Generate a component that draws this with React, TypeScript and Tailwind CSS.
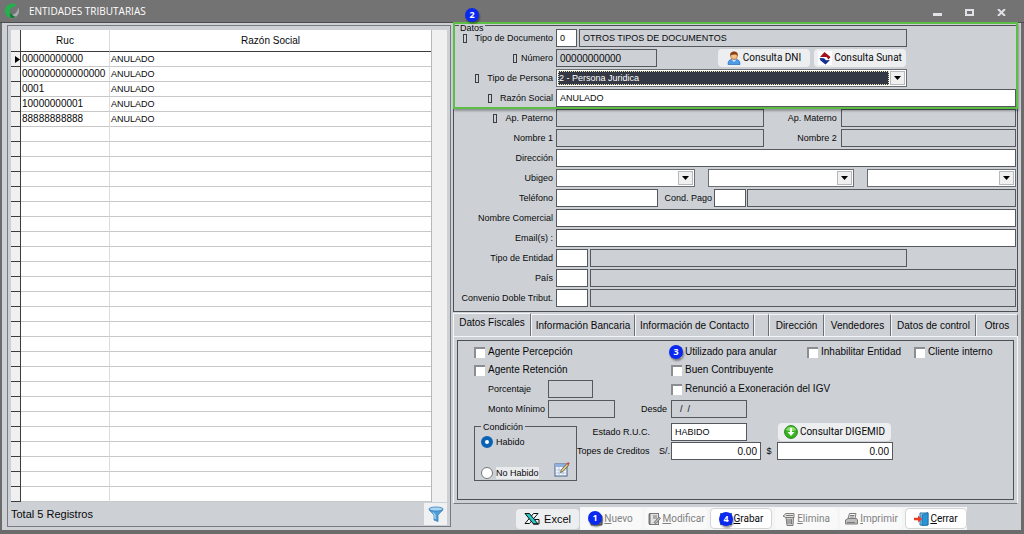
import React from 'react';
import clsx from 'clsx';

const records = [
  { ruc: '00000000000', name: 'ANULADO' },
  { ruc: '000000000000000', name: 'ANULADO' },
  { ruc: '0001', name: 'ANULADO' },
  { ruc: '10000000001', name: 'ANULADO' },
  { ruc: '88888888888', name: 'ANULADO' },
];

const TOTAL_ROWS = 30;

function Badge({ n, className }: { n: number; className?: string }) {
  return (
    <span
      className={clsx(
        'absolute z-20 flex h-[14px] w-[14px] items-center justify-center rounded-full bg-[#0a28f0] font-["Open_Sans",sans-serif] text-[9px] font-bold text-white shadow-[1px_2px_2px_rgba(0,0,0,0.4)]',
        className
      )}
    >
      {n}
    </span>
  );
}

type FieldProps = React.InputHTMLAttributes<HTMLInputElement> & { disabledLook?: boolean };

function Field({ disabledLook, className, ...props }: FieldProps) {
  return (
    <input
      type="text"
      readOnly={disabledLook}
      className={clsx(
        'h-[18px] min-w-0 rounded-none border border-[#55585d] px-[3px] outline-none',
        disabledLook ? 'bg-[#cdd0d5]' : 'bg-white',
        className
      )}
      {...props}
    />
  );
}

function Row({
  label,
  htmlFor,
  required,
  tight,
  children,
}: {
  label: string;
  htmlFor: string;
  required?: boolean;
  tight?: boolean;
  children: React.ReactNode;
}) {
  return (
    <div className="flex h-[18px] items-center">
      <label
        htmlFor={htmlFor}
        className={clsx(
          'mr-[3px] flex w-[98px] shrink-0 items-center justify-end whitespace-nowrap',
          tight ? 'gap-1' : 'gap-2'
        )}
      >
        {required && <span className="h-[9px] w-1 shrink-0 border border-[#3a3d42]" />}
        {label}
      </label>
      {children}
    </div>
  );
}

function Combo({
  id,
  label,
  value,
  active,
  className,
}: {
  id: string;
  label?: string;
  value?: string;
  active?: boolean;
  className?: string;
}) {
  return (
    <div className={clsx('relative flex h-[18px] border border-[#6a6d72] bg-white p-px', className)}>
      <select
        id={id}
        aria-label={label}
        className={clsx(
          'mr-4 min-w-0 flex-1 appearance-none rounded-none outline-none',
          active && 'border border-dotted border-[#e8e4b0] bg-[#333844] text-white'
        )}
      >
        <option>{value}</option>
      </select>
      <span className="pointer-events-none absolute top-px right-px flex h-[14px] w-[15px] items-center justify-center border border-[#b5b8bc] bg-[#f0f0f0]">
        <svg width="7" height="4" viewBox="0 0 7 4">
          <path d="M0 0h7L3.500 4z" fill="#000" />
        </svg>
      </span>
    </div>
  );
}

function Check({ id, label, className, children }: { id: string; label: string; className?: string; children?: React.ReactNode }) {
  return (
    <div className={clsx('relative flex h-[18px] shrink-0 items-center gap-[3px] text-[10px] whitespace-nowrap', className)}>
      <input
        id={id}
        type="checkbox"
        className="h-[11px] w-[11px] appearance-none border-t-2 border-l-2 border-[#8a8d92] bg-white"
      />
      <label htmlFor={id}>{label}</label>
      {children}
    </div>
  );
}

function UserIcon() {
  return (
    <svg width="14" height="14" viewBox="0 0 14 14">
      <path d="M1 13.500c0-4 2-5.500 6-5.500s6 1.500 6 5.500z" fill="#4f9be6" stroke="#2a6cb5" strokeWidth=".7" />
      <path d="M4.500 8.500 7 11l2.500-2.500z" fill="#dcecfb" />
      <circle cx="7" cy="5" r="3.400" fill="#f6c08a" stroke="#a35a1d" strokeWidth=".6" />
      <path d="M3.200 5C2.800 1.500 5 .5 7 .5s4.300 1 3.800 4.500C10 3.600 9 3.200 7.500 3.500 5.500 3.800 4 3.500 3.200 5z" fill="#8a3f14" />
    </svg>
  );
}

function SunatIcon() {
  return (
    <svg width="14" height="14" viewBox="0 0 14 14">
      <rect width="14" height="14" fill="#fff" />
      <path d="M6.500 1 12.500 6 10.500 8.500 8.500 6 2 6z" fill="#a3121d" />
      <path d="M1.500 7 6 7.200 8 9.300 12 9 7.500 13.500 2.500 9.500z" fill="#12308f" />
    </svg>
  );
}

function DownloadIcon() {
  return (
    <svg width="14" height="14" viewBox="0 0 14 14">
      <circle cx="7" cy="7" r="6.400" fill="#35b51f" stroke="#1f7d12" strokeWidth=".9" />
      <path d="M2 5a5.500 5.500 0 0 1 10 0c-3 1.500-7 1.500-10 0z" fill="#8fe070" />
      <path d="M6 3h2v4h2.500L7 11 3.500 7H6z" fill="#fff" />
    </svg>
  );
}

function EditIcon() {
  return (
    <svg width="16" height="16" viewBox="0 0 16 16">
      <rect x="1" y="3" width="12" height="12" fill="#f4f8fd" stroke="#44608c" />
      <path d="M1 3h12v3H1z" fill="#8fb0de" />
      <path d="M5 6v9M9 6v9M1 9h12M1 12h12" stroke="#a9bcd6" strokeWidth=".8" />
      <path d="M6.500 11.500l.7-2.500L13 2.500l1.700 1.500-5.800 6.500z" fill="#e5cf86" stroke="#4a4030" strokeWidth=".7" />
      <path d="M12.800 2.700 14 1l1.700 1.300-1.200 1.600z" fill="#d0453c" />
    </svg>
  );
}

function FunnelIcon() {
  return (
    <svg width="16" height="16" viewBox="0 0 16 16">
      <path d="M1 3c0 2 5 5 5 6.500V14l4 1.500v-6C10 8 15 5 15 3z" fill="#4d9fdb" stroke="#2d74ae" strokeWidth=".7" />
      <ellipse cx="8" cy="3" rx="7" ry="2" fill="#a8d6f5" stroke="#2d74ae" strokeWidth=".7" />
      <path d="M5 6.500 7 9v4" stroke="#d3ecfb" fill="none" />
    </svg>
  );
}

function ExcelIcon() {
  return (
    <svg width="16" height="14" viewBox="0 0 16 14">
      <path d="M14 1.500H9.500L1 11.500h4.500z" fill="#f4fbfb" stroke="#111" />
      <path d="M1 1.500h4.500L14 12H9.500z" fill="#27c7c4" stroke="#111" />
      <path d="M11 7.500h4v4.500H9" stroke="#111" fill="none" />
    </svg>
  );
}

function NewIcon() {
  return (
    <svg width="14" height="14" viewBox="0 0 14 14">
      <path d="M2 1h8l3 3v9H2z" fill="#a8a8a8" stroke="#555" />
    </svg>
  );
}

function NotebookIcon() {
  return (
    <svg width="14" height="14" viewBox="0 0 14 14" fill="none" stroke="#777">
      <rect x="2.500" y="1.500" width="9" height="11" fill="#e2e2e2" />
      <path d="M1 3h3M1 5h3M1 7h3M1 9h3M1 11h3M6 4h4M6 6h4" />
      <path d="M7 10.500 12 5l1.500 1.300L9 11.500z" fill="#bbb" />
    </svg>
  );
}

function SaveIcon() {
  return (
    <svg width="14" height="14" viewBox="0 0 14 14">
      <rect x="1" y="1" width="12" height="12" fill="#3a76b8" />
      <rect x="4" y="8" width="6" height="5" fill="#e8eef5" />
    </svg>
  );
}

function TrashIcon() {
  return (
    <svg width="14" height="14" viewBox="0 0 14 14" fill="none" stroke="#7c7c7c">
      <path d="M4 5.500h7.500l-.5 8H5z" fill="#cfcfcf" />
      <path d="M1 4 4 1.500h8v4H4z" fill="#e5e5e5" />
      <path d="M6 7v5M8 7v5M9.500 7v5M4 3.500h7" />
    </svg>
  );
}

function PrinterIcon() {
  return (
    <svg width="15" height="14" viewBox="0 0 15 14" stroke="#7c7c7c">
      <path d="M4 6.500 5.500 1.500H12L11 6.500z" fill="#f7f7f7" />
      <path d="M1.500 8 4 6.500h8.500l1 1.500v4h-12z" fill="#bdbdbd" />
      <path d="M3 10.500h8M6 3.500h4.500M5.500 5h4.500" fill="none" />
    </svg>
  );
}

function ExitIcon() {
  return (
    <svg width="15" height="14" viewBox="0 0 15 14">
      <path d="M6 1h8v12H6z" fill="#8cc4ea" stroke="#2477ad" />
      <path d="M8 3l6-2.500V13l-6 1z" fill="#2b94d6" stroke="#155f93" strokeWidth=".6" />
      <path d="M0 5.800h4V3.500L8 7l-4 3.500V8.200H0z" fill="#ea3a22" />
    </svg>
  );
}

const tabs = [
  { label: 'Datos Fiscales', width: 'w-[78px]' },
  { label: 'Información Bancaria', width: 'w-[104px]' },
  { label: 'Información de Contacto', width: 'w-[119px]' },
  { label: '', width: 'w-[15px]' },
  { label: 'Dirección', width: 'w-[55px]' },
  { label: 'Vendedores', width: 'w-[67px]' },
  { label: 'Datos de control', width: 'w-[85px]' },
  { label: 'Otros', width: 'w-[42px]' },
];

const actions = [
  { label: 'Nuevo', icon: <NewIcon />, disabled: true, badge: 1 },
  { label: 'Modificar', icon: <NotebookIcon />, disabled: true },
  { label: 'Grabar', icon: <SaveIcon />, badge: 4 },
  { label: 'Elimina', icon: <TrashIcon />, disabled: true },
  { label: 'Imprimir', icon: <PrinterIcon />, disabled: true },
  { label: 'Cerrar', icon: <ExitIcon /> },
];

function TitleBar() {
  return (
    <header className="flex h-[23px] items-center border-b border-[#4c4c4c] bg-[#737373] pr-[17px] pl-[5px]">
      <svg width="14" height="16" viewBox="0 0 14 16">
        <path d="M6 15.500c5 0 8-4 8-8 0-1.500-.5-2.500-1-3 0 4-2.500 7-7 7.500-1 1 0 3 0 3.500z" fill="#a9adb5" />
        <path d="M9 .5C3 0 0 4 0 8c0 3.500 2.500 6.500 6 7-1.500-2-1.500-4-.5-5C3.500 7 6 3.500 11.500 3 11 1.500 10 .8 9 .5z" fill="#22b14c" />
        <path d="M6 15c2 .5 4-.5 5-1.500-2 0-4.500-1.500-5-4-1.500 1.500-1.500 4 0 5.500z" fill="#147a35" />
      </svg>
      <h1 className="ml-[10px] flex-1 font-['Open_Sans',sans-serif] text-[10px] text-white">ENTIDADES TRIBUTARIAS</h1>
      <div className="flex gap-[22px]">
        <button aria-label="Minimizar" className="flex h-[10px] w-[10px] items-end">
          <span className="h-[3px] w-[9px] bg-[#e0e0e6]" />
        </button>
        <button aria-label="Maximizar" className="flex h-[10px] w-[10px] items-end">
          <span className="h-[7px] w-[9px] border-2 border-[#e0e0e6]" />
        </button>
        <button aria-label="Cerrar ventana" className="flex h-[10px] w-[10px] items-end">
          <svg width="9" height="7" viewBox="0 0 9 7">
            <path d="M1 0l7 7M8 0L1 7" stroke="#e0e0e6" strokeWidth="2" />
          </svg>
        </button>
      </div>
    </header>
  );
}

function RecordList() {
  return (
    <section className="flex w-[444px] shrink-0 flex-col self-start border border-[#777a80] px-[3px] pt-[4px]">
      <div className="flex bg-[#f0f0f0]">
        <table className="flex-1 table-fixed border-separate border-spacing-0 bg-white">
          <colgroup>
            <col className="w-[10px]" />
            <col className="w-[89px]" />
            <col />
          </colgroup>
          <thead className="text-[10px]">
            <tr>
              <th className="h-[22px] w-[10px] border-r border-b border-[#3c3c3c] bg-[#f0f0f0] p-0" />
              <th className="h-[22px] w-[89px] border-r border-r-[#dcdcdc] border-b border-b-[#3c3c3c] p-0 font-normal">Ruc</th>
              <th className="h-[22px] border-b border-[#3c3c3c] p-0 font-normal">Razón Social</th>
            </tr>
          </thead>
          <tbody>
            {Array.from({ length: TOTAL_ROWS }, (_, i) => {
              const record = records[i];
              return (
                <tr key={i}>
                  <td className="h-[15px] border-r border-b border-[#3c3c3c] bg-[#f0f0f0] p-0">
                    {i === 0 && (
                      <svg className="ml-[4px]" width="5" height="7" viewBox="0 0 5 7">
                        <path d="M0 0v7l5-3.500z" />
                      </svg>
                    )}
                  </td>
                  <td className="h-[15px] border-r border-r-[#dcdcdc] border-b border-b-[#c8c8c8] p-0 pl-px text-[10px]">{record?.ruc}</td>
                  <td className="h-[15px] border-b border-[#c8c8c8] p-0 pl-px">{record?.name}</td>
                </tr>
              );
            })}
          </tbody>
        </table>
        <div className="w-4 border-l border-[#b8b8b8]" />
      </div>
      <div className="flex h-[24px] items-center justify-between text-[11px]">
        <span>Total 5 Registros</span>
        <button aria-label="Filtrar" className="flex h-[22px] w-[23px] items-center justify-center bg-[#f0f1f3]">
          <FunnelIcon />
        </button>
      </div>
    </section>
  );
}

const lookupButton =
  'flex h-[18px] items-center justify-center gap-[2px] rounded-sm bg-[#eceef0] font-["Roboto",sans-serif] text-[10px] whitespace-nowrap';

function DataForm() {
  return (
    <fieldset className="relative flex min-w-0 flex-col gap-[2px] border border-[#4c4f54] px-px pt-[3px] pb-[4px]">
      <legend className="absolute -top-[2px] left-[5px] z-20 bg-[#cdd0d5] px-px leading-[8px]">Datos</legend>

      <div className="relative flex flex-col gap-[2px]">
        <div className="pointer-events-none absolute -inset-x-[2px] -top-[7px] -bottom-[2px] z-10 border-2 border-[#5bbf45] shadow-[1px_2px_2px_rgba(0,0,0,0.3)]">
          <Badge n={2} className="-top-[16px] left-[10px]" />
        </div>
        <Row label="Tipo de Documento" htmlFor="tipoDoc" required>
          <Field id="tipoDoc" defaultValue="0" className="w-[21px]" />
          <Field aria-label="Descripción del documento" disabledLook defaultValue="OTROS TIPOS DE DOCUMENTOS" className="mr-[109px] ml-[2px] flex-1" />
        </Row>
        <Row label="Número" htmlFor="numero" required tight>
          <Field id="numero" disabledLook defaultValue="00000000000" className="w-[101px] text-[10px]" />
          <div className="mr-[110px] ml-auto flex gap-1">
            <button className={clsx(lookupButton, 'w-[92px]')}>
              <UserIcon />
              Consulta DNI
            </button>
            <button className={clsx(lookupButton, 'w-[92px]')}>
              <SunatIcon />
              Consulta Sunat
            </button>
          </div>
        </Row>
        <Row label="Tipo de Persona" htmlFor="tipoPersona" required>
          <Combo id="tipoPersona" value="2 - Persona Juridica" active className="mr-[109px] flex-1" />
        </Row>
        <Row label="Razón Social" htmlFor="razon" required>
          <Field id="razon" defaultValue="ANULADO" className="flex-1" />
        </Row>
      </div>

      <Row label="Ap. Paterno" htmlFor="paterno" required>
        <Field id="paterno" disabledLook className="w-0 grow-[209]" />
        <label htmlFor="materno" className="mr-1 w-[73px] text-right">Ap. Materno</label>
        <Field id="materno" disabledLook className="w-0 grow-[175]" />
      </Row>
      <Row label="Nombre 1" htmlFor="nombre1">
        <Field id="nombre1" disabledLook className="w-0 grow-[209]" />
        <label htmlFor="nombre2" className="mr-1 w-[73px] text-right">Nombre 2</label>
        <Field id="nombre2" disabledLook className="w-0 grow-[175]" />
      </Row>
      <Row label="Dirección" htmlFor="direccion">
        <Field id="direccion" className="flex-1" />
      </Row>
      <Row label="Ubigeo" htmlFor="departamento">
        <div className="flex flex-1 gap-[13px]">
          <Combo id="departamento" className="w-0 grow-[139]" />
          <Combo id="provincia" label="Provincia" className="w-0 grow-[146]" />
          <Combo id="distrito" label="Distrito" className="w-0 grow-[149]" />
        </div>
      </Row>
      <Row label="Teléfono" htmlFor="telefono">
        <Field id="telefono" className="w-[102px]" />
        <label htmlFor="condPago" className="mr-[2px] w-[54px] text-right">Cond. Pago</label>
        <Field id="condPago" className="w-[32px]" />
        <Field aria-label="Descripción de pago" disabledLook className="ml-px flex-1" />
      </Row>
      <Row label="Nombre Comercial" htmlFor="comercial">
        <Field id="comercial" className="flex-1" />
      </Row>
      <Row label="Email(s) :" htmlFor="email">
        <Field id="email" className="flex-1" />
      </Row>
      <Row label="Tipo de Entidad" htmlFor="entidad">
        <Field id="entidad" className="w-[32px]" />
        <Field aria-label="Descripción de entidad" disabledLook className="mr-[109px] ml-[2px] flex-1" />
      </Row>
      <Row label="País" htmlFor="pais">
        <Field id="pais" className="w-[32px]" />
        <Field aria-label="Nombre del país" disabledLook className="ml-[2px] flex-1" />
      </Row>
      <Row label="Convenio Doble Tribut." htmlFor="convenio">
        <Field id="convenio" className="w-[32px]" />
        <Field aria-label="Descripción del convenio" disabledLook className="ml-[2px] flex-1" />
      </Row>
    </fieldset>
  );
}

function FiscalPanel() {
  return (
    <div className="border-x border-b border-x-[#f4f5f6] border-b-[#777a80] p-[3px]">
      <div className="h-[160px] border border-[#4c4f54] px-4 pt-[2px]">
        <div className="flex">
          <Check id="percepcion" label="Agente Percepción" className="w-[197px]" />
          <Check id="anular" label="Utilizado para anular" className="w-[136px]">
            <Badge n={3} className="top-[2px] -left-[2px]" />
          </Check>
          <Check id="inhabilitar" label="Inhabilitar Entidad" className="w-[107px]" />
          <Check id="interno" label="Cliente interno" />
        </div>
        <div className="flex">
          <Check id="retencion" label="Agente Retención" className="w-[197px]" />
          <Check id="buen" label="Buen Contribuyente" />
        </div>
        <div className="mt-px flex items-center">
          <label htmlFor="porcentaje" className="w-[74px] pl-[14px]">Porcentaje</label>
          <div className="w-[123px]">
            <Field id="porcentaje" disabledLook className="block w-[45px]" />
          </div>
          <Check id="renuncio" label="Renunció a Exoneración del IGV" />
        </div>
        <div className="mt-[2px] flex items-center">
          <label htmlFor="monto" className="w-[74px] pl-[14px] whitespace-nowrap">Monto Mínimo</label>
          <Field id="monto" disabledLook className="w-[67px]" />
          <label htmlFor="desde" className="mr-1 w-[52px] text-right">Desde</label>
          <Field id="desde" disabledLook defaultValue="  /  /" className="w-[76px] whitespace-pre" />
        </div>
        <div className="flex">
          <fieldset className="relative mt-2 h-[55px] w-[103px] border border-[#55585d] px-[6px] pt-2">
            <legend className="absolute -top-[6px] left-[6px] bg-[#cdd0d5] px-[2px] leading-[12px]">Condición</legend>
            <div className="flex h-[14px] items-center gap-[3px]">
              <input
                id="habido"
                name="condicion"
                type="radio"
                defaultChecked
                className="h-[12px] w-[12px] appearance-none rounded-full border-[#8a8d92] bg-white checked:border-4 checked:border-[#0a62b5]"
              />
              <label htmlFor="habido">Habido</label>
            </div>
            <div className="mt-3 flex items-center gap-[3px]">
              <input
                id="noHabido"
                name="condicion"
                type="radio"
                className="h-[12px] w-[12px] appearance-none rounded-full border border-[#77797d] bg-white checked:border-4"
              />
              <label htmlFor="noHabido" className="bg-[#e9eaec] whitespace-nowrap">No Habido</label>
              <button aria-label="Editar condición" className="mb-2 ml-auto">
                <EditIcon />
              </button>
            </div>
          </fieldset>
          <div className="mt-[5px] flex flex-1 flex-col gap-px">
            <div className="flex items-center">
              <label htmlFor="estado" className="mr-[21px] w-[73px] text-right whitespace-nowrap">Estado R.U.C.</label>
              <Field id="estado" defaultValue="HABIDO" className="w-[76px]" />
              <button className={clsx(lookupButton, 'ml-[31px] w-[113px]')}>
                <DownloadIcon />
                Consultar DIGEMID
              </button>
            </div>
            <div className="flex items-center">
              <label htmlFor="tope" className="flex w-[94px] justify-between pr-px whitespace-nowrap">
                <span>Topes de Creditos</span>
                <span>S/.</span>
              </label>
              <Field id="tope" defaultValue="0.00" className="w-[90px] text-right text-[10px]" />
              <label htmlFor="topeUsd" className="w-[16px] text-center">$</label>
              <Field id="topeUsd" defaultValue="0.00" className="w-[116px] text-right text-[10px]" />
            </div>
          </div>
        </div>
      </div>
    </div>
  );
}

export default function App() {
  return (
    <div className="flex min-h-screen flex-col bg-[#6b6b6b] font-['Liberation_Sans',Arial,sans-serif] text-[9px] leading-[12px] text-[#08090a]">
      <TitleBar />
      <main className="mr-[3px] mb-[4px] ml-[2px] flex flex-1 gap-[2px] bg-[#cdd0d5] pt-[2px] pr-[3px] pl-[5px]">
        <RecordList />
        <div className="flex min-w-0 flex-1 flex-col">
          <DataForm />
          <div role="tablist" className="mt-px flex h-[24px] border-b border-[#f4f5f6] text-[10px]">
            {tabs.map((tab, i) => (
              <button
                key={i}
                role="tab"
                aria-label={tab.label || 'Vacía'}
                aria-selected={i === 0}
                className={clsx(
                  'border-t border-r border-l border-t-[#f4f5f6] border-r-[#6c6f74] border-l-[#f4f5f6] whitespace-nowrap',
                  i === 0 ? 'pb-1' : 'mt-px',
                  tab.width
                )}
              >
                {tab.label}
              </button>
            ))}
          </div>
          <FiscalPanel />
          <div className="mt-[3px] mr-[51px] flex items-center justify-end gap-px">
            <button className="flex h-[20px] w-[63px] items-center justify-center gap-1 rounded-sm bg-[#eceef0] text-[11px]">
              <ExcelIcon />
              Excel
            </button>
            <div className="flex gap-[3px] bg-[#f4f5f6] py-px text-[10px]">
              {actions.map((action) => (
                <button
                  key={action.label}
                  disabled={action.disabled}
                  className={clsx(
                    'relative flex h-[21px] w-[62px] items-center justify-center gap-px rounded-sm font-["Roboto",sans-serif] whitespace-nowrap',
                    action.disabled ? 'bg-[#f9f9f9] text-[#808080]' : 'border border-[#d4d4d4] bg-white'
                  )}
                >
                  {action.icon}
                  <span>
                    <u>{action.label[0]}</u>
                    {action.label.slice(1)}
                  </span>
                  {action.badge && <Badge n={action.badge} className="top-[3px] left-[8px]" />}
                </button>
              ))}
            </div>
          </div>
        </div>
      </main>
    </div>
  );
}
